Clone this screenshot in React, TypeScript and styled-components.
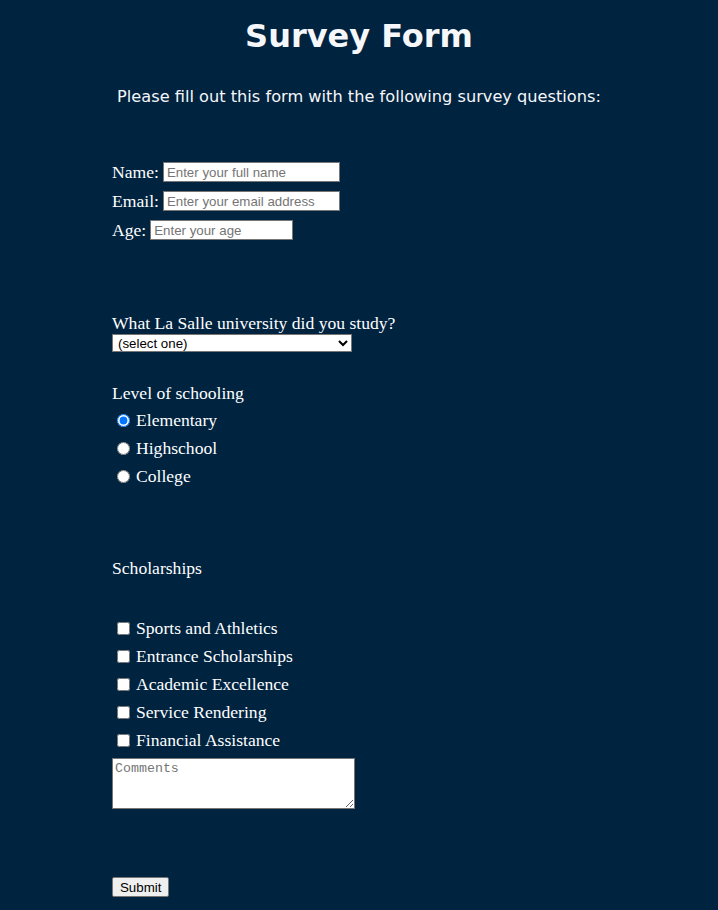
import React from "react";
import styled, { createGlobalStyle } from "styled-components";

const Global = createGlobalStyle`
  html, body { margin: 0; padding: 0; }
  body { background: #00233f; color: #ffffff; font-family: "Liberation Serif", serif; }
`;

const Page = styled.div`
  min-height: 910px;
  background: #00233f;
  overflow: hidden;
`;

const Title = styled.h1`
  margin: 14px 0 0;
  text-align: center;
  font-family: "DejaVu Sans", Verdana, sans-serif;
  font-weight: bold;
  font-size: 32px;
  line-height: 44px;
  color: #f5f7fa;
`;

const Subtitle = styled.p`
  margin: 28px 0 0;
  text-align: center;
  font-family: "DejaVu Sans", Verdana, sans-serif;
  font-size: 16.2px;
  line-height: 22px;
  color: #f5f7fa;
`;

const Form = styled.form`
  display: flex;
  flex-direction: column;
  align-items: flex-start;
  padding-left: 112px;
`;

const Block = styled.div<{ $top: number; $gap?: number }>`
  display: flex;
  flex-direction: column;
  align-items: flex-start;
  margin-top: ${(p) => p.$top}px;
  gap: ${(p) => p.$gap ?? 0}px;
`;

const Row = styled.div`
  display: flex;
  align-items: center;
  height: 20px;
  font-size: 17.6px;
`;

const Label = styled.label`
  font-size: 17.6px;
  line-height: 20px;
  margin-right: 4px;
`;

const TextInput = styled.input<{ $w: number }>`
  box-sizing: border-box;
  width: ${(p) => p.$w}px;
  height: 20px;
  padding: 1px 3px;
  border: 1px solid #767676;
  border-radius: 0;
  font-family: "Liberation Sans", Arial, sans-serif;
  font-size: 13.3px;
  background: #fff;
  &::placeholder { color: #757575; }
`;

const Question = styled.div`
  font-size: 17.6px;
  line-height: 20px;
`;

const Select = styled.select`
  box-sizing: border-box;
  width: 240px;
  height: 18px;
  margin-top: 1px;
  padding: 0 1px;
  border: 1px solid #767676;
  border-radius: 0;
  font-family: "Liberation Sans", Arial, sans-serif;
  font-size: 13.3px;
  background: #fff;
  color: #000;
`;

const Choice = styled.label`
  display: flex;
  align-items: center;
  height: 28px;
  font-size: 17.6px;
  input {
    margin: 0 6px 0 5px;
    width: 13px;
    height: 13px;
  }
`;

const TextArea = styled.textarea`
  box-sizing: border-box;
  width: 243px;
  height: 51px;
  margin-top: 4px;
  padding: 2px;
  border: 1px solid #767676;
  border-radius: 0;
  font-family: "Liberation Mono", monospace;
  font-size: 13.3px;
  background: #fff;
`;

const Submit = styled.button`
  box-sizing: border-box;
  height: 20px;
  padding: 1px 7px;
  border: 1px solid #767676;
  border-radius: 2px;
  background: #efefef;
  color: #000;
  font-family: "Liberation Sans", Arial, sans-serif;
  font-size: 13.3px;
`;

const scholarships = [
  "Sports and Athletics",
  "Entrance Scholarships",
  "Academic Excellence",
  "Service Rendering",
  "Financial Assistance",
];

export default function App() {
  return (
    <Page>
      <Global />
      <Title>Survey Form</Title>
      <Subtitle>Please fill out this form with the following survey questions:</Subtitle>
      <Form onSubmit={(e) => e.preventDefault()}>
        <Block $top={54} $gap={9}>
          <Row>
            <Label>Name:</Label>
            <TextInput $w={177} placeholder="Enter your full name" />
          </Row>
          <Row>
            <Label>Email:</Label>
            <TextInput $w={177} placeholder="Enter your email address" />
          </Row>
          <Row>
            <Label>Age:</Label>
            <TextInput $w={143} placeholder="Enter your age" />
          </Row>
        </Block>
        <Block $top={73}>
          <Question>What La Salle university did you study?</Question>
          <Select defaultValue="">
            <option value="">(select one)</option>
            <option>De La Salle University</option>
            <option>La Salle Green Hills</option>
          </Select>
        </Block>
        <Block $top={31}>
          <Question>Level of schooling</Question>
          <Block $top={3}>
            <Choice><input type="radio" name="level" defaultChecked />Elementary</Choice>
            <Choice><input type="radio" name="level" />Highschool</Choice>
            <Choice><input type="radio" name="level" />College</Choice>
          </Block>
        </Block>
        <Block $top={68}>
          <Question>Scholarships</Question>
          <Block $top={36}>
            {scholarships.map((s) => (
              <Choice key={s}><input type="checkbox" />{s}</Choice>
            ))}
          </Block>
          <TextArea placeholder="Comments" />
        </Block>
        <Block $top={68}>
          <Submit type="submit">Submit</Submit>
        </Block>
      </Form>
    </Page>
  );
}
